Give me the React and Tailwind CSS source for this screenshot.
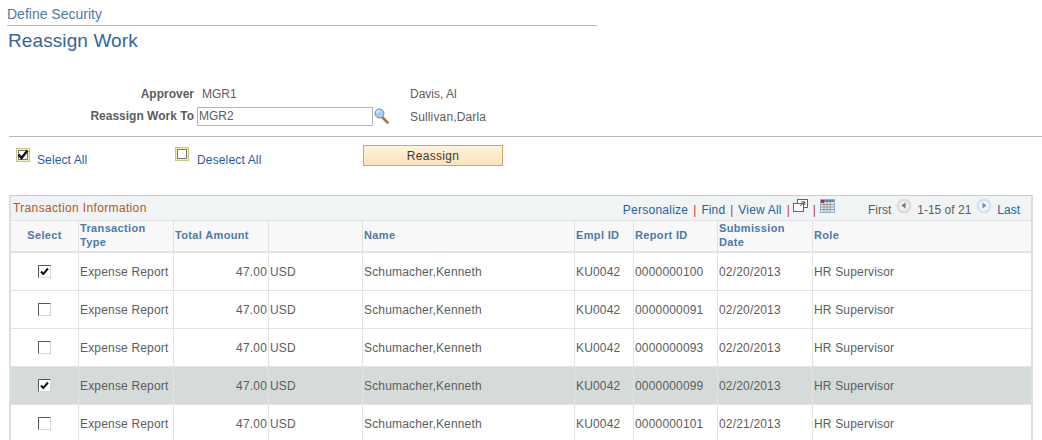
import React from 'react';

const rows = [
  { checked: true, id: '0000000100', date: '02/20/2013' },
  { checked: false, id: '0000000091', date: '02/20/2013' },
  { checked: false, id: '0000000093', date: '02/20/2013' },
  { checked: true, id: '0000000099', date: '02/20/2013', active: true },
  { checked: false, id: '0000000101', date: '02/21/2013' },
];

const gridCols = 'grid grid-cols-[68px_95px_95px_94px_212px_59px_84px_95px_1fr]';

const Check = ({ checked }) => (
  <svg width="13" height="13" viewBox="0 0 13 13" className="block">
    <rect x="0.5" y="0.5" width="12" height="12" fill="#fff" stroke="#8d8d8d" />
    <path d="M0.5 12.5V0.5H12.5" fill="none" stroke="#555" />
    <path d="M12.5 0.5V12.5H0.5" fill="none" stroke="#d8d8d0" />
    {checked && <path d="M3 6.5L5.3 9L10 3.5" fill="none" stroke="#111" strokeWidth="2" />}
  </svg>
);

const YellowCheck = ({ checked }) => (
  <svg width="14" height="14" viewBox="0 0 14 14" className="block">
    <rect x="0.5" y="0.5" width="13" height="13" fill="#f4f0b8" stroke="#c9c77f" />
    <rect x="2.5" y="2.5" width="9" height="9" fill="#fff" stroke="#777" />
    {checked && <path d="M2.5 6.5L5.5 10L11.5 2.5" fill="none" stroke="#111" strokeWidth="2.4" />}
  </svg>
);

const Lookup = () => (
  <svg width="15" height="16" viewBox="0 0 15 16" className="block">
    <line x1="8.5" y1="9.5" x2="13.5" y2="14.5" stroke="#9a7a4e" strokeWidth="2.6" strokeLinecap="round" />
    <circle cx="5.5" cy="5.5" r="4.5" fill="#a9cdf0" stroke="#6d8fb0" />
    <path d="M3 5a2.6 2.6 0 0 1 2.5-2.3" fill="none" stroke="#eaf4ff" strokeWidth="1.4" />
  </svg>
);

const NavArrow = ({ dir }) => (
  <svg width="16" height="16" viewBox="0 0 16 16" className="block">
    <circle cx="8" cy="8" r="7.5" fill={dir === 'left' ? '#dcdcdc' : '#d3e3f3'} />
    <circle cx="8" cy="8" r="5" fill={dir === 'left' ? '#eeeeee' : '#eef5fb'} />
    <path d={dir === 'left' ? 'M9.5 4.5V10.5L5.5 7.5Z' : 'M6.5 4.5V10.5L10.5 7.5Z'} fill={dir === 'left' ? '#777' : '#6a90b8'} />
  </svg>
);

const NewWindow = () => (
  <svg width="15" height="14" viewBox="0 0 15 14" className="block">
    <rect x="4.5" y="0.5" width="10" height="8" fill="#fff" stroke="#666" />
    <rect x="0.5" y="4.5" width="10" height="8" fill="#fff" stroke="#666" />
    <path d="M7 7L11.5 3M8.5 2.8H11.8V6" fill="none" stroke="#555" />
  </svg>
);

const Spreadsheet = () => (
  <svg width="15" height="14" viewBox="0 0 15 14" className="block">
    <rect x="0" y="0" width="15" height="14" fill="#8faed0" />
    <rect x="1" y="1" width="13" height="2" fill="#5f87b5" />
    <rect x="1" y="3" width="13" height="10" fill="#e8e8e8" />
    <path d="M1 5.5H14M1 8H14M1 10.5H14M4 3V13M7 3V13M10 3V13" stroke="#9a9a9a" />
    <rect x="1" y="1" width="3" height="3" fill="#e01818" />
  </svg>
);

const Sep = ({ className = 'mx-[5px]' }) => <span className={`${className} text-[#c0392b]`}>|</span>;

const headerCell = 'flex items-center pb-[2px] border-r border-[#e3e3e3] text-[11px] leading-[14px] font-bold tracking-[0.35px] text-[#4b7aa8]';
const bodyCell = 'flex items-center pl-[1px] border-r border-[#e3e3e3] text-[12px] tracking-[0.17px] text-[#5d5d5d]';

export default function App() {
  return (
    <div className="h-[440px] w-[1042px] overflow-hidden bg-white font-['Liberation_Sans',Arial,sans-serif] text-[12px] text-[#5d5d5d]">
      <div className="ml-[7px] w-[590px] h-[26px] border-b border-[#b5b5b5] pt-[5px] text-[14px] leading-[18px] text-[#4f7aa6]">
        Define Security
      </div>
      <div className="ml-[8px] mt-[3px] text-[19px] leading-[24px] tracking-[0.1px] text-[#336699]">Reassign Work</div>

      <div className="mt-[32px] flex h-[18px] items-center">
        <div className="w-[194px] text-right font-bold">Approver</div>
        <div className="ml-[8px] w-[208px]">MGR1</div>
        <div>Davis, Al</div>
      </div>
      <div className="mt-[3px] flex h-[20px] items-center">
        <div className="w-[194px] text-right font-bold">Reassign Work To</div>
        <div className="ml-[3px] flex h-[19px] w-[176px] items-center border border-[#b5b5b5] pl-[1px]">MGR2</div>
        <div className="ml-[1px] w-[36px]"><Lookup /></div>
        <div className="pt-[2px] tracking-[0.15px]">Sullivan,Darla</div>
      </div>
      <div className="ml-[9px] mt-[10px] border-b border-[#b9b9b9]" />

      <div className="mt-[8px] flex h-[22px] items-start">
        <div className="ml-[16px] mt-[3px]"><YellowCheck checked /></div>
        <a className="ml-[7px] mt-[8px] w-[138px] leading-[14px] tracking-[0.1px] text-[#1f5da8]">Select All</a>
        <div className="mt-[2px]"><YellowCheck /></div>
        <a className="ml-[8px] mt-[8px] w-[166px] leading-[14px] tracking-[0.15px] text-[#1f5da8]">Deselect All</a>
        <button className="h-[21px] w-[140px] border border-[#d3a46d] bg-gradient-to-b from-[#fff3dc] to-[#fbe3b9] text-[12px] tracking-[0.3px] text-[#3c3c3c]">
          Reassign
        </button>
      </div>

      <div className="ml-[9px] mt-[28px] w-[1024px] border-x-2 border-t border-x-[#dcdfdf] border-t-[#c9cfcf]">
        <div className="flex h-[24px] items-center justify-between bg-[#f0f4f5] pl-[2px] pr-[11px]">
          <div className="text-[12px] tracking-[0.35px] text-[#b5562a]">Transaction Information</div>
          <div className="flex items-center pt-[4px] text-[12px] text-[#23639f]">
            <a className="tracking-[0.25px]">Personalize</a>
            <Sep />
            <a className="tracking-[0.1px]">Find</a>
            <Sep />
            <a className="tracking-[0.2px]">View All</a>
            <Sep className="ml-[5px] mr-[3px]" />
            <span className="-mt-[8px]"><NewWindow /></span>
            <Sep className="ml-[5px] mr-[4px]" />
            <span className="-mt-[8px]"><Spreadsheet /></span>
            <span className="ml-[33px] text-[#5d5d5d]">First</span>
            <span className="mx-[5px] -mt-[9px]"><NavArrow dir="left" /></span>
            <span className="text-[#5d5d5d]">1-15 of 21</span>
            <span className="mx-[5px] -mt-[9px]"><NavArrow dir="right" /></span>
            <a>Last</a>
          </div>
        </div>

        <div className={`${gridCols} h-[33px] border-y border-b-[2px] border-y-[#e3e3e3] bg-[#f8f8f8]`}>
          <div className={`${headerCell} justify-center`}>Select</div>
          <div className={`${headerCell} pl-[1px]`}>Transaction<br />Type</div>
          <div className={`${headerCell} pl-[1px]`}>Total Amount</div>
          <div className={headerCell} />
          <div className={`${headerCell} pl-[1px]`}>Name</div>
          <div className={`${headerCell} pl-[1px]`}>Empl ID</div>
          <div className={`${headerCell} pl-[1px]`}>Report ID</div>
          <div className={`${headerCell} pl-[1px]`}>Submission<br />Date</div>
          <div className="flex items-center pb-[2px] pl-[1px] text-[11px] font-bold tracking-[0.35px] text-[#4b7aa8]">Role</div>
        </div>

        {rows.map((r) => (
          <div key={r.id} className={`${gridCols} h-[38px] border-b border-[#e3e3e3] ${r.active ? 'bg-[#d5dbd9]' : 'bg-white'}`}>
            <div className={`${bodyCell} justify-center !pl-0`}><Check checked={r.checked} /></div>
            <div className={bodyCell}>Expense Report</div>
            <div className={`${bodyCell} justify-end !pl-0 pr-[1px]`}>47.00</div>
            <div className={bodyCell}>USD</div>
            <div className={bodyCell}>Schumacher,Kenneth</div>
            <div className={bodyCell}>KU0042</div>
            <div className={bodyCell}>{r.id}</div>
            <div className={bodyCell}>{r.date}</div>
            <div className="flex items-center pl-[1px] text-[12px] tracking-[0.17px]">HR Supervisor</div>
          </div>
        ))}
      </div>
    </div>
  );
}
